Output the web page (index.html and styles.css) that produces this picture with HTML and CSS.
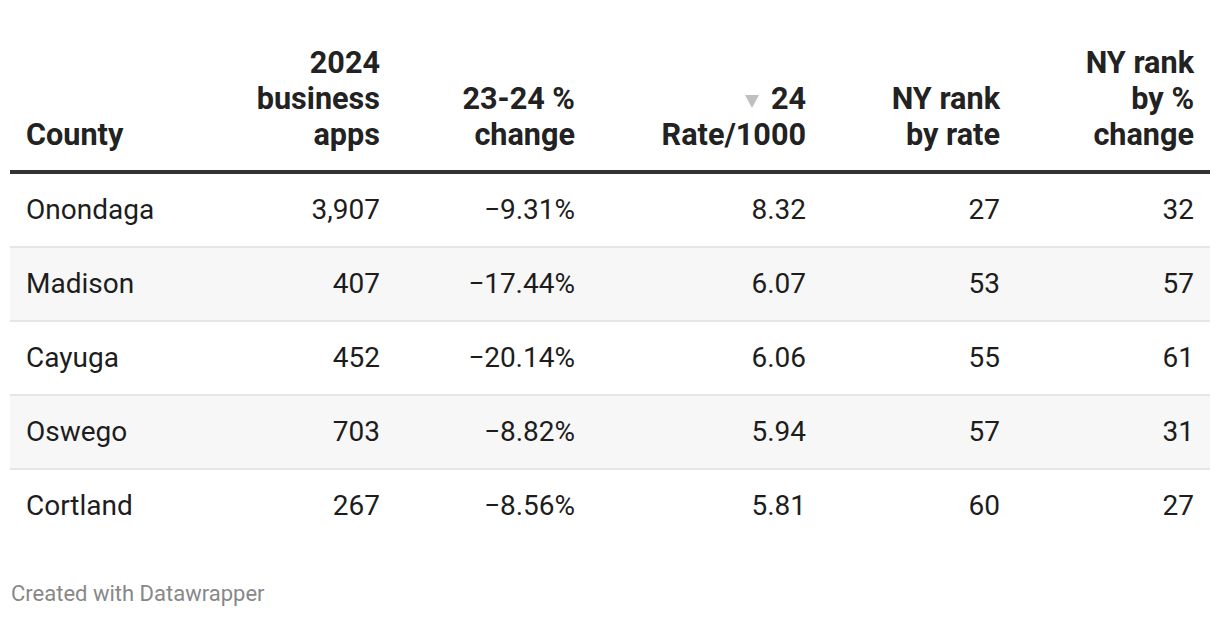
FILE: index.html
```html
<!DOCTYPE html>
<html>
<head>
<meta charset="utf-8">
<link rel="stylesheet" href="styles.css">
</head>
<body>
<div class="chart">
  <table class="tbl">
    <colgroup>
      <col class="c1"><col class="c2"><col class="c3"><col class="c4"><col class="c5"><col class="c6">
    </colgroup>
    <thead>
      <tr>
        <th class="left">County</th>
        <th>2024<br>business<br>apps</th>
        <th>23-24 %<br>change</th>
        <th><span class="sort"></span>24<br>Rate/1000</th>
        <th>NY rank<br>by rate</th>
        <th>NY rank<br>by %<br>change</th>
      </tr>
    </thead>
    <tbody>
      <tr><td class="left">Onondaga</td><td>3,907</td><td>&minus;9.31%</td><td>8.32</td><td>27</td><td>32</td></tr>
      <tr class="alt"><td class="left">Madison</td><td>407</td><td>&minus;17.44%</td><td>6.07</td><td>53</td><td>57</td></tr>
      <tr><td class="left">Cayuga</td><td>452</td><td>&minus;20.14%</td><td>6.06</td><td>55</td><td>61</td></tr>
      <tr class="alt"><td class="left">Oswego</td><td>703</td><td>&minus;8.82%</td><td>5.94</td><td>57</td><td>31</td></tr>
      <tr class="last"><td class="left">Cortland</td><td>267</td><td>&minus;8.56%</td><td>5.81</td><td>60</td><td>27</td></tr>
    </tbody>
  </table>
  <div class="footer">Created with Datawrapper</div>
</div>
</body>
</html>
```
FILE: styles.css
```css
html, body {
  margin: 0;
  padding: 0;
  background: #fff;
}
body {
  font-family: Roboto, "Liberation Sans", Arial, sans-serif;
  color: #1d1d1d;
}
.chart {
  padding: 45px 10px 0 10px;
}
.tbl {
  width: 1200px;
  border-collapse: collapse;
  table-layout: fixed;
}
.c1 { width: 140px; }
.c2 { width: 246px; }
.c3 { width: 195px; }
.c4 { width: 231px; }
.c5 { width: 194px; }
.c6 { width: 194px; }
.tbl th {
  font-weight: 700;
  font-size: 30.6px;
  line-height: 36px;
  color: #222;
  text-align: right;
  vertical-align: bottom;
  padding: 0 16px 17px 16px;
  border-bottom: 4px solid #333;
  white-space: nowrap;
}
.tbl td {
  font-size: 28px;
  line-height: 36px;
  text-align: right;
  padding: 18px 16px;
  border-bottom: 2px solid #e6e6e6;
  white-space: nowrap;
}
.tbl tr.last td {
  border-bottom: none;
}
.tbl tr.alt td {
  background: #f7f7f7;
}
.tbl .left {
  text-align: left;
}
.sort {
  display: inline-block;
  width: 0;
  height: 0;
  border-left: 7px solid transparent;
  border-right: 7px solid transparent;
  border-top: 13px solid #c0c0c0;
  margin-right: 12px;
  vertical-align: 1px;
}
.footer {
  margin-top: 39px;
  padding-left: 1px;
  font-size: 22px;
  line-height: 26px;
  color: #888;
}
```
